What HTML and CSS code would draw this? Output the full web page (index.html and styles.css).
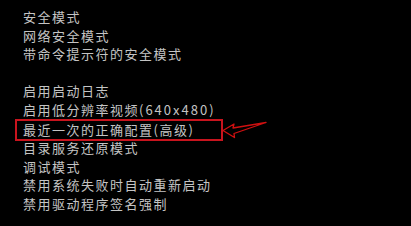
FILE: index.html
```html
<!DOCTYPE html>
<html lang="zh-CN">
<head>
<meta charset="utf-8">
<link rel="stylesheet" href="styles.css">
</head>
<body>
<div class="screen">
  <ul class="menu">
    <li class="item">安全模式</li>
    <li class="item">网络安全模式</li>
    <li class="item">带命令提示符的安全模式</li>
    <li class="item gap"></li>
    <li class="item">启用启动日志</li>
    <li class="item">启用低分辨率视频<span class="latin">(640x480)</span></li>
    <li class="item marked">最近一次的正确配置(高级)
      <svg class="arrow" width="60" height="24" viewBox="0 0 60 24">
        <path d="M4 13.5 L15 7 L14 11 L47 5.5 L15 16.5 L15.5 20.5 Z" fill="none" stroke="#d01010" stroke-width="1.3" stroke-linejoin="round"/>
      </svg>
    </li>
    <li class="item">目录服务还原模式</li>
    <li class="item">调试模式</li>
    <li class="item">禁用系统失败时自动重新启动</li>
    <li class="item">禁用驱动程序签名强制</li>
  </ul>
</div>
</body>
</html>
```
FILE: styles.css
```css
html, body {
  margin: 0;
  padding: 0;
  background: #000;
}
.screen {
  width: 411px;
  height: 226px;
  background: #000;
  overflow: hidden;
  padding: 8px 0 0 23px;
  box-sizing: border-box;
}
.menu {
  list-style: none;
  margin: 0;
  padding: 0;
  display: flex;
  flex-direction: column;
}
.item {
  font-family: "Noto Sans CJK SC", "Liberation Sans", sans-serif;
  font-size: 13px;
  letter-spacing: 1.5px;
  line-height: 18.6px;
  height: 18.6px;
  color: #c4c4c4;
  white-space: nowrap;
  position: relative;
}
.latin {
  letter-spacing: 2px;
}
.marked {
  margin: 0 0 -2.4px -8px;
  padding-left: 6px;
  width: 198px;
  border: 2px solid #c8141e;
  height: 18px;
  line-height: 18px;
  transform: translateY(-1px);
}
.arrow {
  position: absolute;
  left: 202px;
  top: -4px;
}
```
